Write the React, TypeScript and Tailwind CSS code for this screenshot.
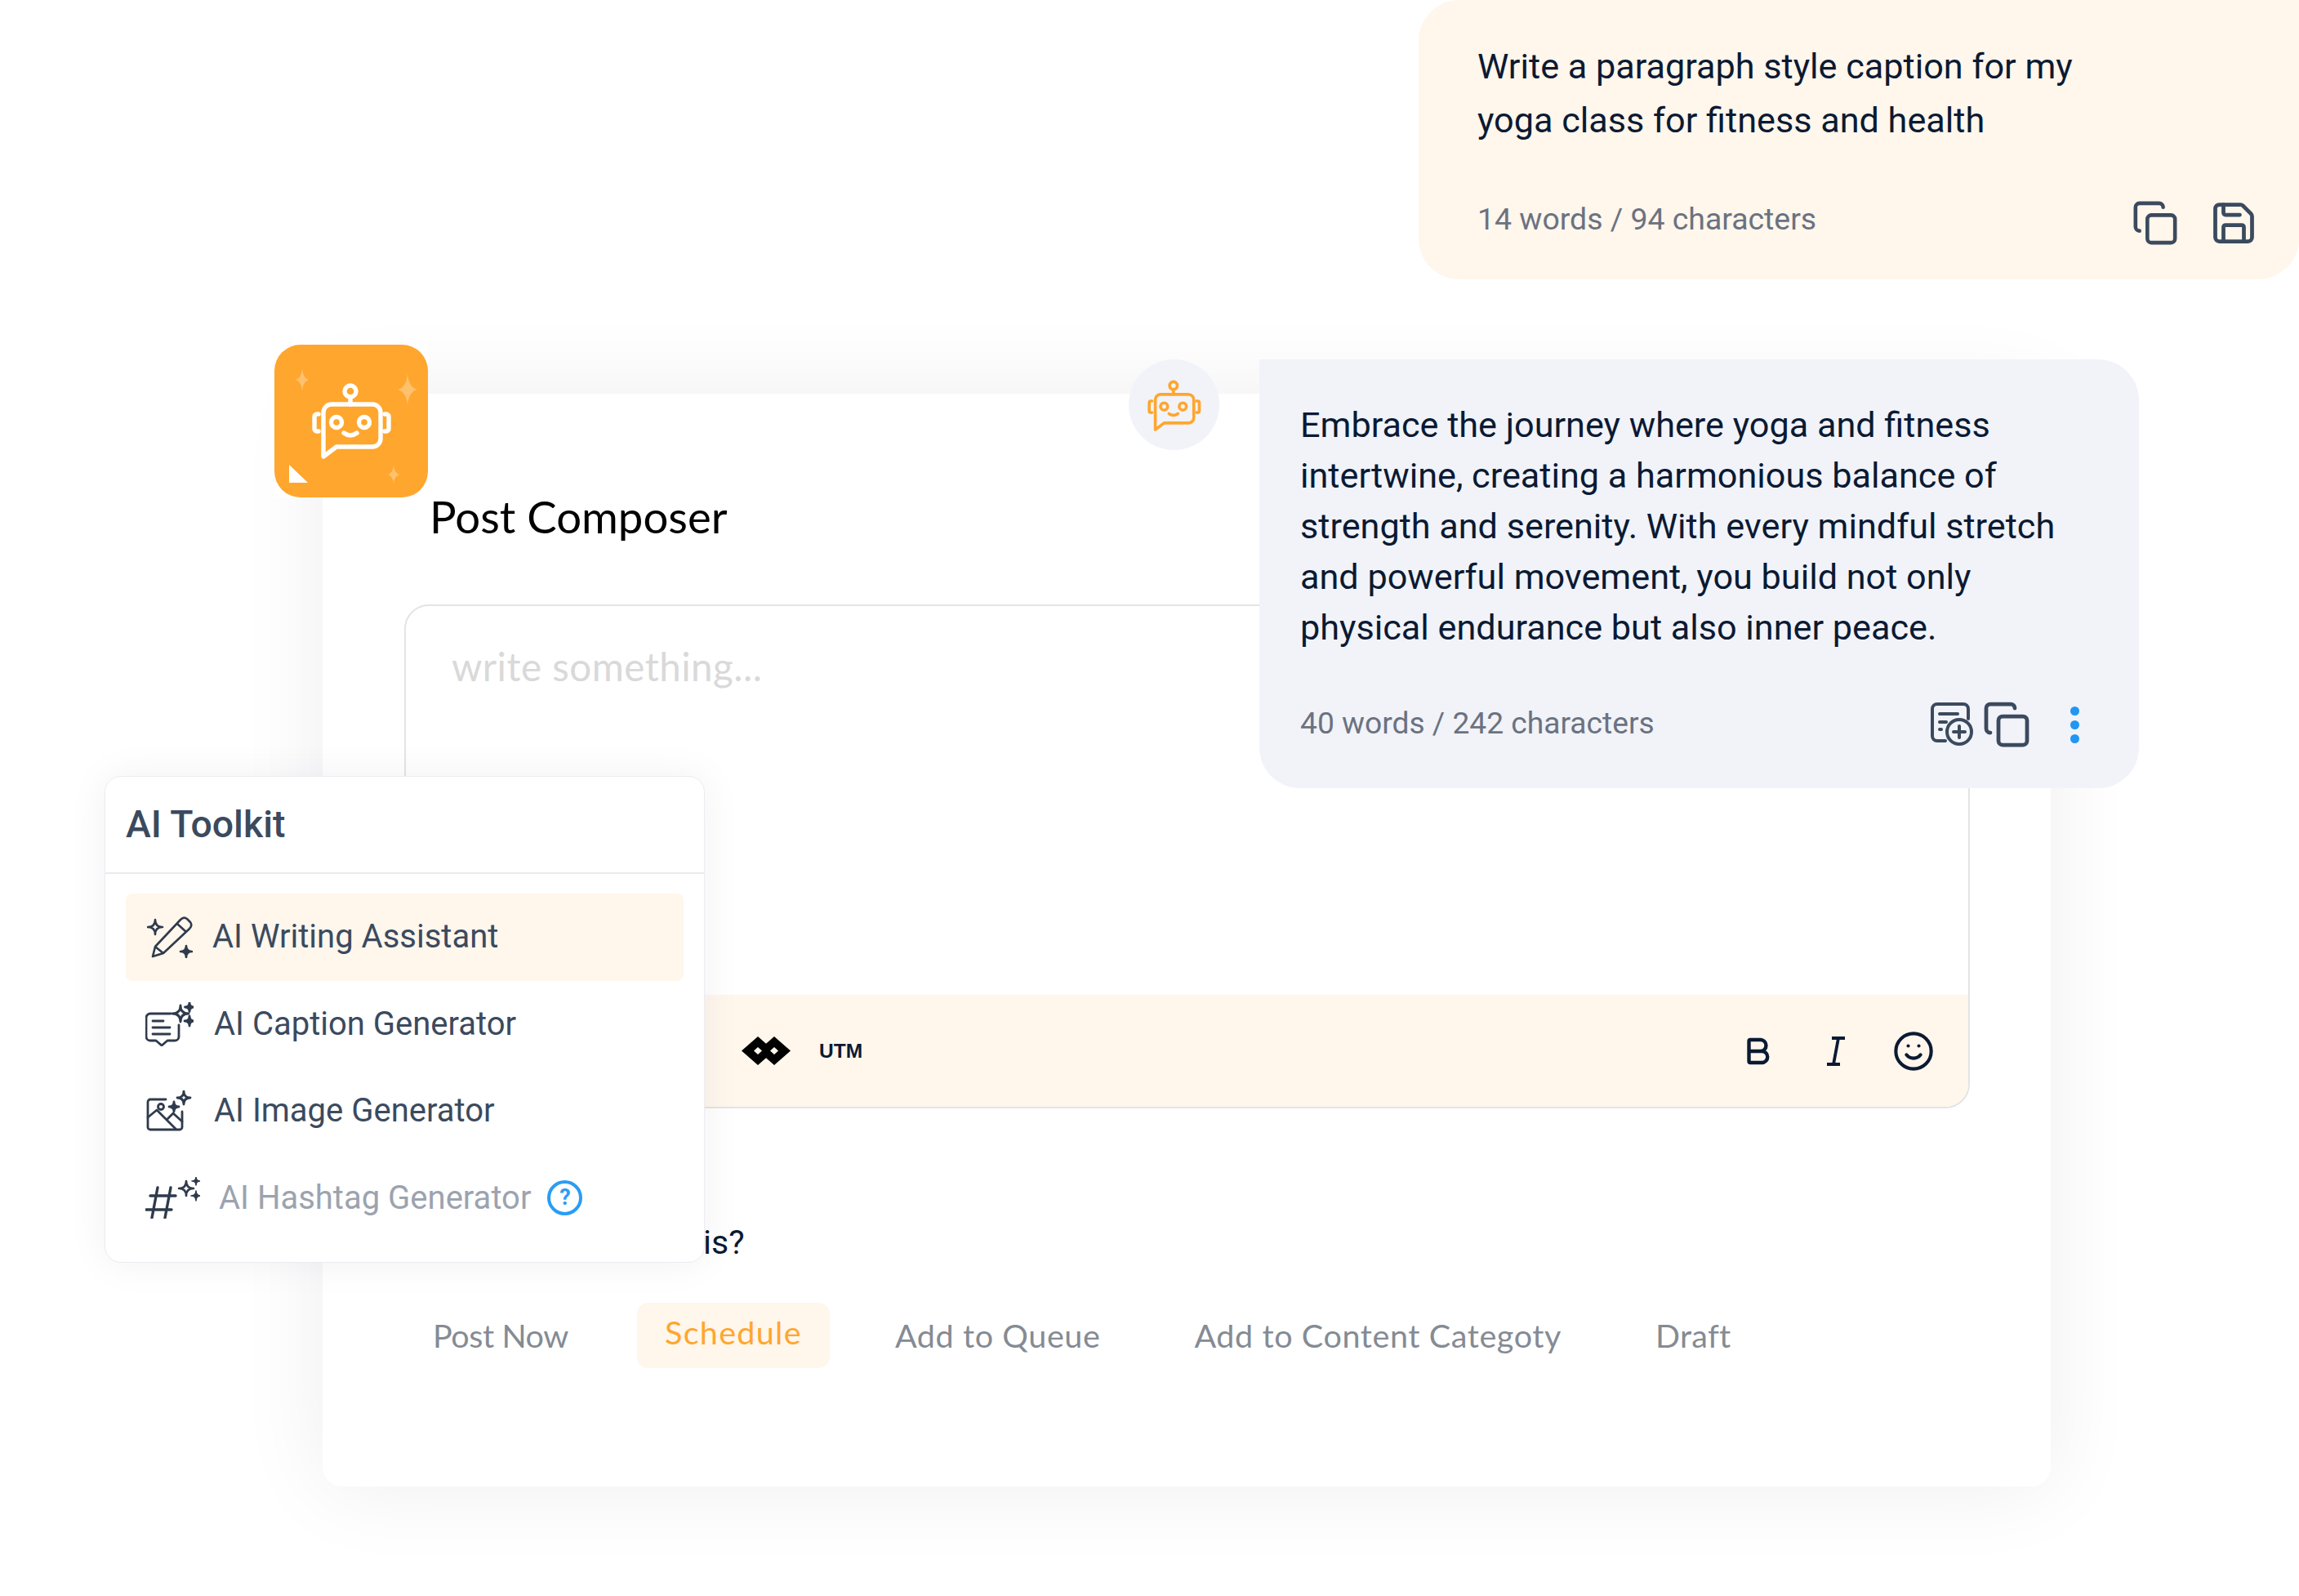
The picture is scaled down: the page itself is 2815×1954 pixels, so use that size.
import { Bold, Copy, Save, Smile } from "lucide-react";

const star = (cx: number, cy: number, r: number) =>
  `M${cx} ${cy - r}Q${cx} ${cy} ${cx + r} ${cy}Q${cx} ${cy} ${cx} ${cy + r}Q${cx} ${cy} ${cx - r} ${cy}Q${cx} ${cy} ${cx} ${cy - r}Z`;

const ink = "#2f3b4c";

function Robot({ color }: { color: string }) {
  return (
    <g fill="none" stroke={color} strokeWidth="5.4" strokeLinecap="round" strokeLinejoin="round">
      <circle cx="93" cy="57" r="7" />
      <path d="M93 64V73" />
      <path d="M69 73H120a10 10 0 0 1 10 10V115a10 10 0 0 1-10 10H76L60 137V83a10 10 0 0 1 9-10Z" />
      <circle cx="76" cy="95" r="6.5" />
      <circle cx="110" cy="95" r="6.5" />
      <path d="M85 108q8 6 16 0" />
      <path d="M54 85h-2a3 3 0 0 0-3 3v15a3 3 0 0 0 3 3h2" />
      <path d="M135 85h2a3 3 0 0 1 3 3v15a3 3 0 0 1-3 3h-2" />
    </g>
  );
}

function AddNoteIcon() {
  return (
    <svg width="52" height="54" viewBox="0 0 52 54" fill="none" stroke="#3b4a5e" strokeWidth="4" strokeLinecap="round" className="shrink-0">
      <path d="M18 47H8a6 6 0 0 1-6-6V8a6 6 0 0 1 6-6h32a6 6 0 0 1 6 6v12" />
      <path d="M11 14h22M11 24h8M11 33h2" />
      <circle cx="35" cy="36" r="15" />
      <path d="M35 29v14M28 36h14" />
    </svg>
  );
}

function ItalicIcon() {
  return (
    <svg width="24" height="36" viewBox="0 0 24 36" fill="none" stroke="#0b1a33" strokeWidth="3.8" className="shrink-0">
      <path d="M7 2H23M1 34H17M15 2L9 34" />
    </svg>
  );
}

function WriteIcon() {
  return (
    <svg width="56" height="51" viewBox="0 0 56 51" fill="none" stroke={ink} strokeWidth="2.6" strokeLinejoin="round" className="shrink-0">
      <path d={star(10, 13, 9)} />
      <path d={star(48, 43, 7)} fill={ink} />
      <path d="M7 49L10 37L41 4Q45 0 49 3L53 7Q56 11 52 15L20 45ZM10 37L20 45M37 9L48 19" />
    </svg>
  );
}

function CaptionIcon() {
  return (
    <svg width="59" height="54" viewBox="0 0 59 54" fill="none" stroke={ink} strokeWidth="2.8" strokeLinecap="round" strokeLinejoin="round" className="shrink-0">
      <path d="M31 14H6a5 5 0 0 0-5 5V42a5 5 0 0 0 5 5H13L20 53L27 47H36a5 5 0 0 0 5-5V28" />
      <path d="M9 23H22M9 31H30M9 39H30" />
      <path d={star(43, 14, 10)} />
      <path d={star(54, 6, 5.5)} fill={ink} />
      <path d={star(54, 23, 6)} fill={ink} />
    </svg>
  );
}

function ImageIcon() {
  return (
    <svg width="56" height="50" viewBox="0 0 56 50" fill="none" stroke={ink} strokeWidth="2.8" strokeLinecap="round" strokeLinejoin="round" className="shrink-0">
      <path d="M24 11H5a3 3 0 0 0-3 3V45a3 3 0 0 0 3 3H41a3 3 0 0 0 3-3V26" />
      <circle cx="18" cy="20" r="3.5" />
      <path d="M2 33L13 24L36 47M25 36L33 28L44 38" />
      <path d={star(46, 9, 8)} />
      <path d={star(34, 20, 6)} fill={ink} />
    </svg>
  );
}

function HashIcon() {
  return (
    <svg width="67" height="51" viewBox="0 0 67 51" fill="none" stroke={ink} strokeWidth="3.4" strokeLinecap="round" strokeLinejoin="round" className="shrink-0">
      <path d="M15 13L8 50M31 13L24 50M6 23H37M1 40H32" />
      <path d={star(50, 14, 9)} strokeWidth="2.6" />
      <path d={star(62, 5, 5)} fill={ink} strokeWidth="1.6" />
      <path d={star(62, 23, 6)} fill={ink} strokeWidth="1.6" />
    </svg>
  );
}

function ToolkitRow({ label, className, children, muted }: { label: string; className: string; children: React.ReactNode; muted?: boolean }) {
  return (
    <div className={`flex h-[106.5px] items-center rounded-lg ${className}`}>
      {children}
      <span className={`text-[40px] ${muted ? "text-[#9ca3af]" : "text-[#3b4a5e]"}`}>{label}</span>
    </div>
  );
}

export default function App() {
  return (
    <div className="relative h-[1954px] w-[2815px] overflow-hidden bg-white font-['Roboto',sans-serif]">
      {/* composer card */}
      <div className="absolute left-[395px] top-[482px] flex h-[1338px] w-[2116px] flex-col rounded-[24px] rounded-tl-none bg-white pl-[100px] shadow-[0_0_110px_rgba(30,35,60,0.07)]">
        <h1 className="ml-[31px] mt-[116px] h-[68px] font-['Lato',sans-serif] text-[54.5px] font-normal leading-[68px] text-black">Post Composer</h1>
        <div className="mt-[74px] flex h-[617px] w-[1917px] flex-col justify-between overflow-hidden rounded-[30px] border-2 border-[#e4e4e4]">
          <div className="pl-[56px] pt-[44px] font-['Lato',sans-serif] text-[47.5px] leading-[60px] tracking-[0.5px] text-[#d9d9d9]">write something...</div>
          <div className="flex h-[137px] items-center justify-between bg-[#fff6ec] pl-[411px] pr-[44px]">
            <div className="flex items-center gap-[35px]">
              <svg width="60" height="35" viewBox="0 0 60 35" className="shrink-0">
                <path fillRule="evenodd" fill="#000" d="M0 17.5L20 0L30 8.75L40 0L60 17.5L40 35L30 26.25L20 35ZM15 17.5L20 22L25 17.5L20 13ZM35 17.5L40 22L45 17.5L40 13Z" />
              </svg>
              <span className="mt-[2px] font-['Liberation_Sans',sans-serif] text-[24.5px] font-bold text-[#0b1a33]">UTM</span>
            </div>
            <div className="flex items-center gap-[63px]">
              <Bold size={42} strokeWidth={2.5} color="#0b1a33" />
              <ItalicIcon />
              <Smile size={52} strokeWidth={1.9} color="#0b1a33" className="-ml-[6px] -mr-[3px]" />
            </div>
          </div>
        </div>
        <div className="ml-[366px] mt-[139px] h-[50px] text-[41px] leading-[50px] text-[#0b1a33]">is?</div>
        <div className="ml-[35px] mt-[49px] flex items-center font-['Lato',sans-serif] text-[39.5px] text-[#858b94]">
          <span className="tracking-[-0.4px]">Post Now</span>
          <span className="ml-[84px] flex h-[80px] w-[236px] items-center justify-center rounded-[14px] bg-[#fff6ec] pb-[8px] tracking-[1.3px] text-[#ffa62e]">Schedule</span>
          <span className="ml-[80px] tracking-[0.6px]">Add to Queue</span>
          <span className="ml-[115px] tracking-[0.6px]">Add to Content Categoty</span>
          <span className="ml-[115px] tracking-[0.3px]">Draft</span>
        </div>
      </div>

      {/* logo tile */}
      <div className="absolute left-[336px] top-[422px] h-[187px] w-[188px] bg-white">
        <svg width="188" height="187" viewBox="0 0 188 187">
          <rect width="188" height="187" rx="32" fill="#ffa62e" />
          <Robot color="#ffffff" />
          <path d="M34 29Q35 41 42 43Q35 45 34 57Q33 45 26 43Q33 41 34 29Z" fill="#ffc16e" />
          <path d="M163 35Q164 52 175 55Q164 58 163 75Q162 58 151 55Q162 52 163 35Z" fill="#ffc16e" />
          <path d="M146 148Q147 157 153 159Q147 161 146 170Q145 161 139 159Q145 157 146 148Z" fill="#ffc16e" />
          <path d="M18 147L41 169H18Z" fill="#ffffff" />
        </svg>
      </div>

      {/* avatar */}
      <div className="absolute left-[1382px] top-[440px] flex h-[111px] w-[111px] items-center justify-center rounded-full bg-[#f1f3f9]">
        <svg width="73" height="64" viewBox="40 45 108 95">
          <Robot color="#ffa62e" />
        </svg>
      </div>

      {/* prompt bubble */}
      <div className="absolute left-[1737px] top-0 flex h-[342px] w-[1078px] flex-col rounded-[50px] rounded-tr-none bg-[#fff6ec] pl-[72px] pr-[50px] pt-[49px]">
        <p className="text-[43.2px] leading-[66px] text-[#0b1a33]">
          Write a paragraph style caption for my
          <br />
          yoga class for fitness and health
        </p>
        <div className="relative mt-[62px] flex items-center justify-between">
          <span className="-mt-[10px] text-[37.4px] text-[#6b7280]">14 words / 94 characters</span>
          <div className="flex items-center gap-[37px]">
            <Copy size={58} strokeWidth={1.9} color="#3b4a5e" />
            <Save size={60} strokeWidth={1.9} color="#3b4a5e" />
          </div>
        </div>
      </div>

      {/* answer bubble */}
      <div className="absolute left-[1542px] top-[440px] flex h-[525px] w-[1077px] flex-col rounded-[50px] rounded-tl-none bg-[#f1f3f9] pl-[50px] pr-[73px] pt-[50px]">
        <p className="text-[43.2px] leading-[62px] text-[#0b1a33]">
          Embrace the journey where yoga and fitness intertwine, creating a harmonious balance of strength and serenity. With every mindful stretch and powerful movement, you build not only physical endurance but also inner peace.
        </p>
        <div className="mt-[54px] flex items-center">
          <span className="text-[37.2px] text-[#6b7280]">40 words / 242 characters</span>
          <div className="ml-auto mt-[3px] flex items-center gap-[15px]">
            <AddNoteIcon />
            <Copy size={60} strokeWidth={1.9} color="#3b4a5e" className="-mx-[4px]" />
            <div className="ml-[37px] flex flex-col gap-[6px]">
              <span className="h-[11px] w-[11px] rounded-full bg-[#2196f3]" />
              <span className="h-[11px] w-[11px] rounded-full bg-[#2196f3]" />
              <span className="h-[11px] w-[11px] rounded-full bg-[#2196f3]" />
            </div>
          </div>
        </div>
      </div>

      {/* toolkit */}
      <div className="absolute left-[128px] top-[950px] h-[596px] w-[735px] rounded-[20px] border border-[#ececf1] bg-white shadow-[0_0_50px_rgba(30,35,60,0.06)]">
        <div className="flex h-[119px] items-center border-b-2 border-[#e9e9ef] pl-[25px] text-[46.4px] font-medium text-[#3b4a5e]">AI Toolkit</div>
        <div className="px-[25px] pt-[24px]">
          <ToolkitRow label="AI Writing Assistant" className="gap-[24px] bg-[#fff6ec] pl-[26px]">
            <WriteIcon />
          </ToolkitRow>
          <ToolkitRow label="AI Caption Generator" className="gap-[25px] pl-[24px]">
            <CaptionIcon />
          </ToolkitRow>
          <ToolkitRow label="AI Image Generator" className="gap-[27px] pl-[25px]">
            <ImageIcon />
          </ToolkitRow>
          <ToolkitRow label="AI Hashtag Generator" className="gap-[23px] pl-[24px]" muted>
            <HashIcon />
            <span className="order-last -ml-[3px] flex h-[43px] w-[43px] items-center justify-center rounded-full border-[4px] border-[#2a9df4] text-[27px] font-bold leading-none text-[#2a9df4]">?</span>
          </ToolkitRow>
        </div>
      </div>
    </div>
  );
}
